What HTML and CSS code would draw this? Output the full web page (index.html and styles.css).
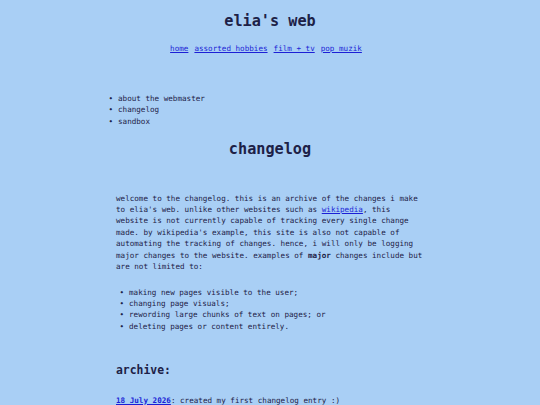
FILE: index.html
```html
<!DOCTYPE html>
<html>
<head>
<meta charset="utf-8">
<title>changelog</title>
<link rel="stylesheet" href="styles.css">
</head>
<body>
<header class="site-header">
  <h1 class="site-title">elia's web</h1>
  <nav class="site-nav">
    <a href="#">home</a>
    <a href="#">assorted hobbies</a>
    <a href="#">film + tv</a>
    <a href="#">pop muzik</a>
  </nav>
</header>
<div class="wrap">
  <ul class="side-list">
    <li>about the webmaster</li>
    <li>changelog</li>
    <li>sandbox</li>
  </ul>
  <h1 class="page-title">changelog</h1>
  <main class="content">
    <p class="intro">welcome to the changelog. this is an archive of the changes i make to elia's web. unlike other websites such as <a href="#">wikipedia</a>, this website is not currently capable of tracking every single change made. by wikipedia's example, this site is also not capable of automating the tracking of changes. hence, i will only be logging major changes to the website. examples of <b>major</b> changes include but are not limited to:</p>
    <ul class="change-list">
      <li>making new pages visible to the user;</li>
      <li>changing page visuals;</li>
      <li>rewording large chunks of text on pages; or</li>
      <li>deleting pages or content entirely.</li>
    </ul>
    <h2 class="archive-title">archive:</h2>
    <p class="entry"><a href="#" class="date">18 July 2026</a>: created my first changelog entry :)</p>
  </main>
</div>
</body>
</html>
```
FILE: styles.css
```css
html, body {
  margin: 0;
  padding: 0;
}
body {
  background: #a9cff5;
  color: #1d2147;
  font-family: "DejaVu Sans Mono", monospace;
  font-size: 7.6px;
  line-height: 1.5;
}
a {
  color: #1c1fd6;
}
.site-header {
  padding-top: 10px;
  text-align: center;
}
.site-title {
  margin: 0;
  font-size: 2em;
  font-weight: bold;
  line-height: 1.5;
}
.site-nav {
  margin-top: 10px;
  display: flex;
  justify-content: center;
  gap: 6px;
  padding-right: 8px;
}
.wrap {
  width: 324px;
  margin: 0 auto;
}
.side-list,
.change-list {
  list-style: none;
}
.side-list li::before,
.change-list li::before {
  content: "•";
  display: inline-block;
  width: 9.6px;
  margin-left: -9.6px;
}
.side-list {
  margin: 38.6px 0 0;
  padding-left: 10px;
}
.page-title {
  margin: 11.5px 0 0;
  font-size: 2em;
  text-align: center;
  line-height: 1.5;
}
.content {
  padding: 0 8px;
}
.intro {
  margin: 31.3px 0 0;
}
.change-list {
  margin: 14.4px 0 0;
  padding-left: 13px;
}
.archive-title {
  margin: 29.4px 0 0;
  font-size: 1.5em;
  line-height: 1.5;
}
.entry {
  margin: 15.9px 0 0;
}
.date {
  font-weight: bold;
}
```
